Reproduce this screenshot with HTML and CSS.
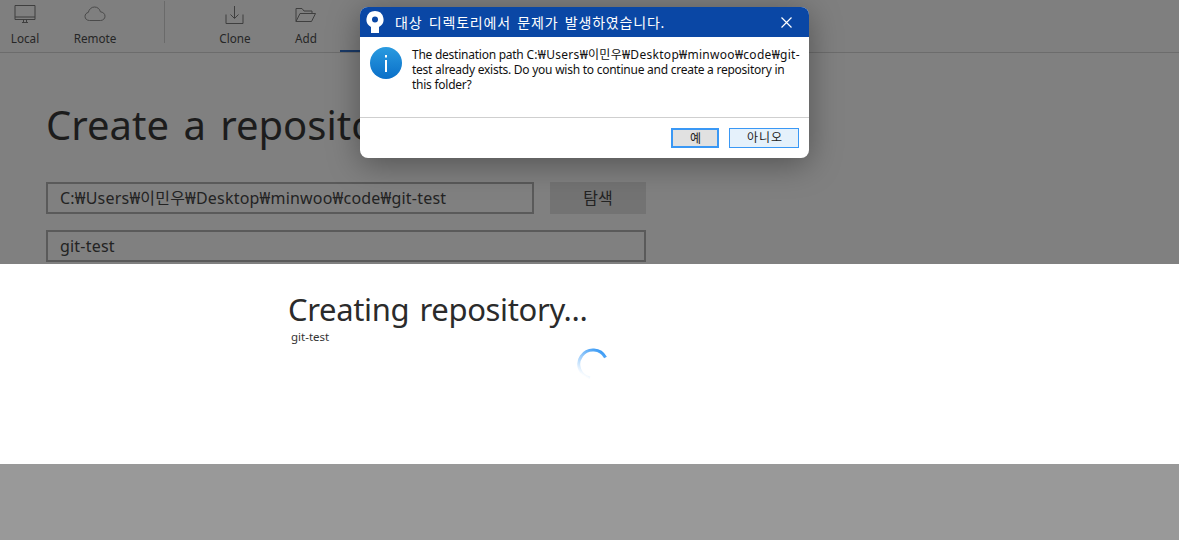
FILE: index.html
```html
<!DOCTYPE html>
<html lang="ko">
<head>
<meta charset="utf-8">
<title>Create a repository</title>
<link rel="stylesheet" href="styles.css">
</head>
<body>
<div class="page">
  <section class="app">
    <nav class="toolbar">
      <div class="tool tool-local">
        <svg class="icon" viewBox="0 0 22 20" width="22" height="20"><path d="M1 .5h20v14H1zM1 12h20M8 17.500h6M9.500 14.500v3M12.500 14.500v3" fill="none" stroke="#3f3f3f"/></svg>
        <span>Local</span>
      </div>
      <div class="tool tool-remote">
        <svg class="icon" viewBox="0 0 22 20" width="22" height="20"><path d="M5.500 15.500C2.800 15.500 1 13.700 1 11.400c0-2 1.400-3.600 3.300-4C5 4.200 7.500 2 10.500 2c3 0 5.300 2 5.900 4.800 2.600.2 4.600 2 4.600 4.400 0 2.400-1.900 4.300-4.500 4.300z" fill="none" stroke="#4a4a4a"/></svg>
        <span>Remote</span>
      </div>
      <div class="divider"></div>
      <div class="tool tool-clone">
        <svg class="icon" viewBox="0 0 20 20" width="20" height="20"><path d="M1 9.500v9h17v-9M9.500 1v12M5.500 9.500l4 4 4-4" fill="none" stroke="#3f3f3f"/></svg>
        <span>Clone</span>
      </div>
      <div class="tool tool-add">
        <svg class="icon" viewBox="0 0 22 20" width="22" height="20"><path d="M1 16.500V3.500h6l2 2.500h8v2.500M1 16.500h15.500l4-8H5zM16.500 16.500" fill="none" stroke="#3f3f3f"/></svg>
        <span>Add</span>
      </div>
      <div class="tab-create"></div>
    </nav>
    <main class="form">
      <h1 class="form-title">Create a repository</h1>
      <div class="field-row">
        <div class="input input-path">C:₩Users₩이민우₩Desktop₩minwoo₩code₩git-test</div>
        <div class="browse">탐색</div>
      </div>
      <div class="input input-name">git-test</div>
    </main>
  </section>
  <section class="progress">
    <h2 class="progress-title">Creating repository...</h2>
    <p class="progress-name">git-test</p>
    <svg class="spinner" viewBox="0 0 34 34" width="34" height="34">
      <defs>
        <linearGradient id="spin" x1="0.900" y1="0" x2="0.300" y2="1">
          <stop offset="0" stop-color="#2f95f5"/>
          <stop offset="1" stop-color="#ffffff"/>
        </linearGradient>
      </defs>
      <path d="M29.500 9.500A14 14 0 0 0 5.500 8 14 14 0 0 0 14 30" fill="none" stroke="url(#spin)" stroke-width="3"/>
    </svg>
  </section>
  <div class="bottom"></div>

  <div class="dialog" role="dialog">
    <header class="dialog-head">
      <svg class="logo" viewBox="0 0 18 22" width="18" height="22"><path fill-rule="evenodd" fill="#ffffff" d="M9 0a8.500 8.500 0 0 1 4 16v6H5v-6A8.500 8.500 0 0 1 9 0zm0 5.500a3 3 0 1 0 0 6 3 3 0 0 0 0-6z"/></svg>
      <span class="dialog-title">대상 디렉토리에서 문제가 발생하였습니다.</span>
      <svg class="close" viewBox="0 0 11 11" width="11" height="11"><path d="M.5.500l10 10M10.500.500l-10 10" stroke="#ffffff" stroke-width="1.200" fill="none"/></svg>
    </header>
    <div class="dialog-body">
      <svg class="info" viewBox="0 0 32 32" width="32" height="32">
        <defs>
          <linearGradient id="infoBg" x1="0.500" y1="0" x2="0.500" y2="1">
            <stop offset="0" stop-color="#2a9be0"/>
            <stop offset="1" stop-color="#0a6fc8"/>
          </linearGradient>
        </defs>
        <circle cx="16" cy="16" r="16" fill="url(#infoBg)"/>
        <rect x="15" y="13" width="2" height="12" fill="#ffffff"/>
        <rect x="15" y="8" width="2" height="2.500" fill="#ffffff"/>
      </svg>
      <p class="dialog-text">The destination path <span class="path">C:₩Users₩이민우₩Desktop₩minwoo₩code₩git-</span><br>test already exists. Do you wish to continue and create a repository in<br>this folder?</p>
    </div>
    <footer class="dialog-foot">
      <div class="btn btn-yes">예</div>
      <div class="btn btn-no">아니오</div>
    </footer>
  </div>
</div>
</body>
</html>
```

FILE: styles.css
```css
* { box-sizing: border-box; }
html, body { margin: 0; padding: 0; }
body {
  width: 1179px;
  height: 540px;
  overflow: hidden;
  font-family: "Noto Sans", "Noto Sans CJK KR", sans-serif;
  background: #808080;
}
.page {
  position: relative;
  width: 1179px;
  height: 540px;
  overflow: hidden;
  display: flex;
  flex-direction: column;
}
.app {
  height: 264px;
  overflow: hidden;
  background: #808080;
  flex: none;
}
.toolbar {
  height: 53px;
  border-bottom: 1px solid #6c6c6c;
  display: flex;
  align-items: flex-start;
  color: #2a2a2a;
  background: #7f7f7f;
}
.tool {
  display: flex;
  flex-direction: column;
  align-items: center;
  font-size: 11.700px;
  line-height: 16px;
  color: #262626;
}
.tool .icon { display: block; margin-top: 5px; margin-bottom: 5px; }
.tool-local { margin-left: 11px; width: 28px; }
.tool-remote { margin-left: 35px; width: 42px; }
.divider { width: 1px; height: 42px; margin: 1px 0 0 48px; background: #6a6a6a; }
.tool-clone { margin-left: 54px; width: 32px; }
.tool-add { margin-left: 43px; width: 24px; }
.tab-create { width: 20px; height: 2px; margin: 50px 0 0 22px; background: #1a3a68; }
.form { padding: 42px 0 0 46px; }
.form-title {
  margin: 0;
  height: 60px;
  font-size: 40px;
  line-height: 60px;
  font-weight: 400;
  color: #1c1c1c;
  word-spacing: 4px;
  white-space: nowrap;
}
.field-row { display: flex; gap: 16px; margin-top: 27px; }
.input {
  width: 600px;
  height: 32px;
  border: 2px solid #5a5a5a;
  padding-left: 12px;
  font-size: 16px;
  letter-spacing: 0.200px;
  line-height: 28px;
  color: #232323;
  white-space: nowrap;
}
.input-path { width: 488px; }
.input-name { margin-top: 16px; }
.browse {
  width: 96px;
  height: 32px;
  background: #737373;
  color: #232323;
  font-size: 16px;
  line-height: 32px;
  text-align: center;
}
.progress {
  position: relative;
  flex: none;
  height: 200px;
  background: #ffffff;
  padding: 23px 0 0 288px;
}
.progress-title {
  margin: 0;
  font-size: 31px;
  line-height: 44px;
  font-weight: 400;
  letter-spacing: -0.350px;
  word-spacing: 2.500px;
  color: #2b2b2b;
  white-space: nowrap;
}
.progress-name {
  margin: -2px 0 0 3px;
  font-size: 11.500px;
  line-height: 16px;
  color: #333333;
}
.spinner { position: absolute; left: 576px; top: 84px; }
.bottom { flex: 1; background: #999999; }
.dialog {
  position: absolute;
  left: 360px;
  top: 7px;
  width: 449px;
  height: 151px;
  background: #ffffff;
  border-radius: 8px;
  overflow: hidden;
  box-shadow: 0 6px 32px rgba(0, 0, 0, 0.36);
  display: flex;
  flex-direction: column;
}
.dialog-head {
  height: 30px;
  flex: none;
  background: #0a47a5;
  display: flex;
  align-items: center;
  padding-left: 6px;
  color: #ffffff;
}
.logo { flex: none; }
.dialog-title {
  margin-left: 11px;
  font-size: 14px;
  letter-spacing: 0.800px;
  word-spacing: 2px;
  white-space: nowrap;
}
.close { margin-left: auto; margin-right: 17px; }
.dialog-body {
  flex: 1;
  display: flex;
  align-items: flex-start;
  padding: 10px 0 0 10px;
}
.info { flex: none; }
.dialog-text {
  margin: 0 0 0 10px;
  font-size: 12px;
  line-height: 15px;
  letter-spacing: -0.250px;
  color: #111111;
  white-space: nowrap;
}
.path { letter-spacing: 0.300px; }
.dialog-foot {
  height: 41px;
  flex: none;
  border-top: 1px solid #cfcfcf;
  display: flex;
  justify-content: flex-end;
  gap: 10px;
  padding: 10px 10px 0 0;
}
.btn {
  height: 20px;
  font-size: 12px;
  line-height: 17px;
  text-align: center;
  color: #222222;
}
.btn-yes { width: 48px; background: #e1e1e1; border: 2px solid #3a98f5; padding-left: 1px; }
.btn-no { width: 70px; background: #e5f1fb; border: 1px solid #3a98f5; line-height: 18px; letter-spacing: 1px; padding-left: 2px; }
```
